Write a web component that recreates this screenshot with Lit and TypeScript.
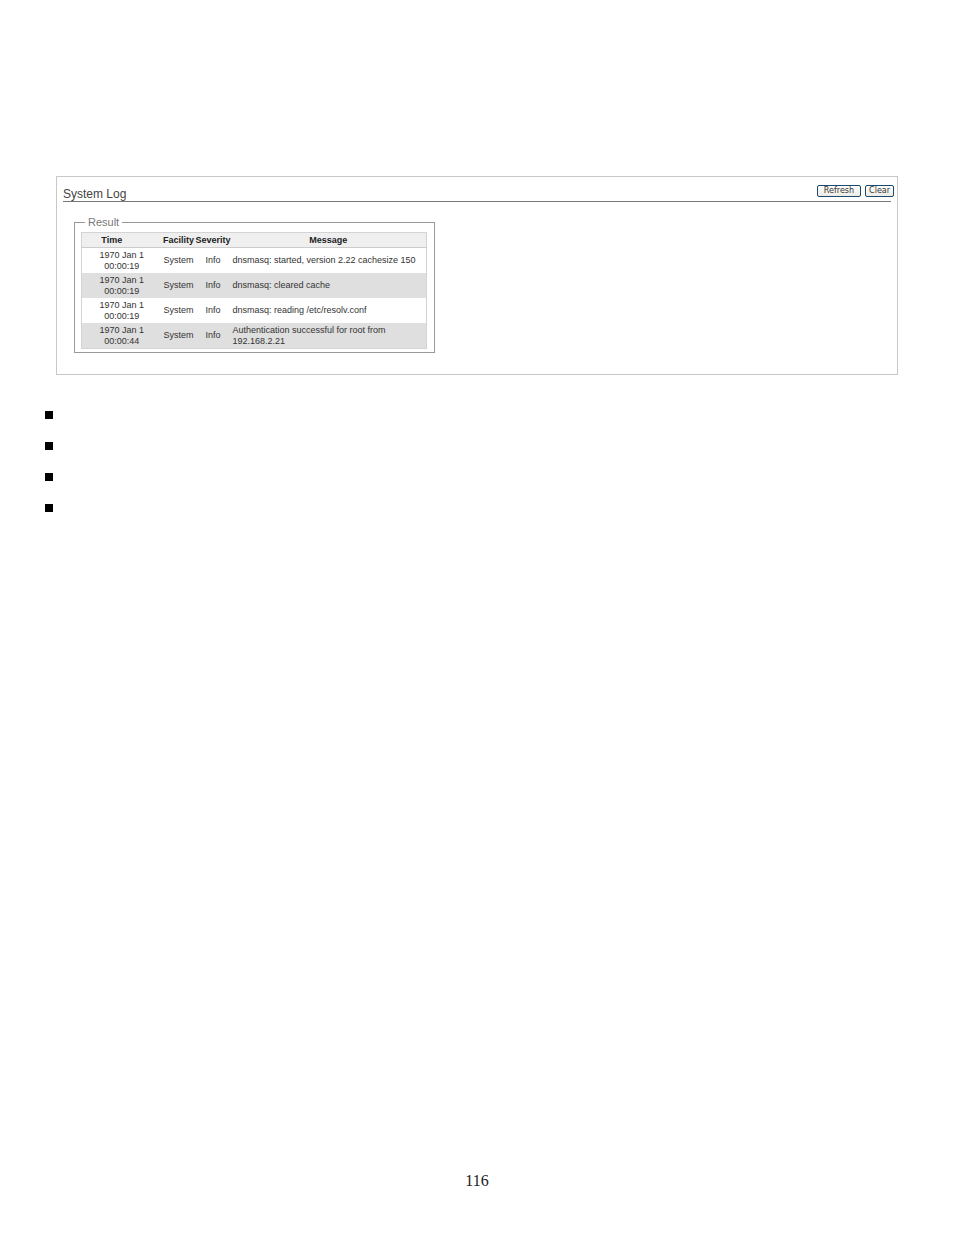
import { LitElement, html, css } from 'lit';
import { customElement, state } from 'lit/decorators.js';

interface LogEntry {
  date: string;
  time: string;
  facility: string;
  severity: string;
  message: string;
}

const ENTRIES: LogEntry[] = [
  { date: '1970 Jan 1', time: '00:00:19', facility: 'System', severity: 'Info', message: 'dnsmasq: started, version 2.22 cachesize 150' },
  { date: '1970 Jan 1', time: '00:00:19', facility: 'System', severity: 'Info', message: 'dnsmasq: cleared cache' },
  { date: '1970 Jan 1', time: '00:00:19', facility: 'System', severity: 'Info', message: 'dnsmasq: reading /etc/resolv.conf' },
  { date: '1970 Jan 1', time: '00:00:44', facility: 'System', severity: 'Info', message: 'Authentication successful for root from 192.168.2.21' },
];

@customElement('system-log')
export class SystemLog extends LitElement {
  static styles = css`
    :host {
      display: block;
      padding: 8px 6px 21px;
      border: 1px solid #c8c8c8;
      color: #333;
      font-family: 'Liberation Sans', Arial, sans-serif;
    }

    .header {
      display: flex;
      justify-content: space-between;
      align-items: flex-start;
      border-bottom: 1px solid #777;
    }

    .title {
      margin: 0;
      padding-top: 2px;
      font-size: 12px;
      font-weight: normal;
      line-height: 14px;
      color: #444;
    }

    .actions {
      display: flex;
      gap: 4px;
      margin-right: -3px;
    }

    .btn {
      height: 12px;
      padding: 0 3px;
      border: 1px solid #1c4a6e;
      border-radius: 2px;
      background: linear-gradient(#fff, #ecebe5);
      color: #333;
      font-family: 'DejaVu Sans', Verdana, sans-serif;
      font-size: 8px;
      line-height: 10px;
    }

    .btn.wide {
      padding: 0 6px;
    }

    .result {
      width: fit-content;
      margin: 14px 0 0 11px;
      padding: 3px 7px 3px 6px;
      border: 1px solid #999;
    }

    .legend {
      margin-left: 4px;
      padding: 0 3px;
      font-size: 11px;
      line-height: 13px;
      color: #777;
    }

    .log {
      width: 346px;
      table-layout: fixed;
      border-collapse: collapse;
      border: 1px solid #d4d4d4;
      font-size: 9px;
      line-height: 11px;
      text-align: center;
    }

    .log th {
      height: 14px;
      padding: 0;
      border-bottom: 1px solid #ccc;
      background: #efefef;
      color: #222;
    }

    .log td {
      height: 25px;
      padding: 0;
    }

    .log tbody tr:nth-child(even) {
      background: #dfdfdf;
    }

    .log td.message {
      padding: 0 6px 0 2px;
      text-align: left;
    }

    .col-time {
      width: 80px;
    }

    .col-facility {
      width: 34px;
    }

    .col-severity {
      width: 35px;
    }

    .time span {
      display: block;
    }

    .log th.time {
      padding-right: 20px;
    }
  `;

  @state() entries: LogEntry[] = ENTRIES;

  refresh() {
    this.entries = [...ENTRIES];
  }

  clear() {
    this.entries = [];
  }

  render() {
    return html`
      <div class="header">
        <h1 class="title">System Log</h1>
        <div class="actions">
          <button class="btn wide" type="button" @click=${this.refresh}>Refresh</button>
          <button class="btn" type="button" @click=${this.clear}>Clear</button>
        </div>
      </div>

      <fieldset class="result">
        <legend class="legend">Result</legend>
        <table class="log">
          <colgroup>
            <col class="col-time" />
            <col class="col-facility" />
            <col class="col-severity" />
            <col />
          </colgroup>
          <thead>
            <tr>
              <th scope="col" class="time">Time</th>
              <th scope="col">Facility</th>
              <th scope="col">Severity</th>
              <th scope="col">Message</th>
            </tr>
          </thead>
          <tbody>
            ${this.entries.map(entry => html`
              <tr>
                <td class="time"><span>${entry.date}</span><span>${entry.time}</span></td>
                <td>${entry.facility}</td>
                <td>${entry.severity}</td>
                <td class="message">${entry.message}</td>
              </tr>
            `)}
          </tbody>
        </table>
      </fieldset>
    `;
  }
}

@customElement('app-root')
export class AppRoot extends LitElement {
  static styles = css`
    :host {
      display: flex;
      flex-direction: column;
      box-sizing: border-box;
      min-height: 100vh;
      padding: 176px 56px 44px;
      background: #fff;
    }

    .bullets {
      display: grid;
      gap: 23px;
      margin: 36px 0 0 -11px;
      padding: 0;
      list-style: none;
    }

    .bullets li {
      width: 8px;
      height: 8px;
      background: #000;
    }

    .page-number {
      margin-top: auto;
      color: #222;
      font-family: 'Liberation Serif', 'Times New Roman', serif;
      font-size: 16px;
      line-height: 20px;
      text-align: center;
    }
  `;

  render() {
    return html`
      <system-log></system-log>
      <ul class="bullets">
        <li></li>
        <li></li>
        <li></li>
        <li></li>
      </ul>
      <footer class="page-number">116</footer>
    `;
  }
}
